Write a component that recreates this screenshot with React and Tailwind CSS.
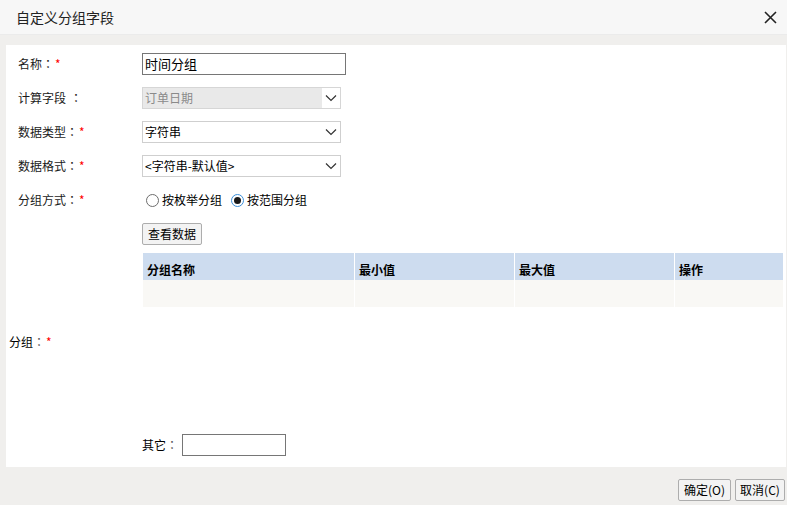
const FONT = { fontFamily: '"Microsoft YaHei", "Noto Sans CJK SC", "Noto Sans", sans-serif' };

function Star() {
  return <span className="text-[#ff0000] ml-[1px]">*</span>;
}

function Colon({ className = '' }) {
  return <span className={`font-['Noto_Sans_CJK_TC'] ${className}`}>：</span>;
}

function Chevron() {
  return (
    <svg width="12" height="8" viewBox="0 0 12 8" className="block">
      <path d="M1 1.5 L6 6.5 L11 1.5" fill="none" stroke="#333" strokeWidth="1.2" />
    </svg>
  );
}

function Select({ value, disabled }) {
  return (
    <div
      className={`flex items-center w-[199px] h-[22px] border ${
        disabled ? 'border-[#d6d6d6] bg-[#e9e9e9] text-[#8a8a8a]' : 'border-[#cfcfcf] bg-white text-black'
      }`}
    >
      <span className="flex-1 pl-[2px] leading-[20px]">{value}</span>
      <span className={`flex items-center justify-center w-[18px] h-full ${disabled ? 'bg-white' : ''}`}>
        <Chevron />
      </span>
    </div>
  );
}

function Row({ label, required, children, spaced }) {
  return (
    <div className="flex items-center h-[22px]">
      <div className="w-[136px] pl-[12px] text-[#1a1a1a]">
        {label}
        <Colon className={spaced ? 'ml-[4px]' : ''} />
        {required && <Star />}
      </div>
      {children}
    </div>
  );
}

function Radio({ checked, label }) {
  return (
    <label className="flex items-center gap-[3px]">
      <span
        className={`flex items-center justify-center w-[13px] h-[13px] rounded-full border ${
          checked ? 'border-[#3b8fd9]' : 'border-[#6d6d6d]'
        } bg-white`}
      >
        {checked && <span className="w-[7px] h-[7px] rounded-full bg-[#1a1a1a]" />}
      </span>
      <span>{label}</span>
    </label>
  );
}

export default function App() {
  const cols = [
    { label: '分组名称', w: 'w-[211px]' },
    { label: '最小值', w: 'w-[159px]' },
    { label: '最大值', w: 'w-[159px]' },
    { label: '操作', w: 'flex-1' },
  ];

  return (
    <div className="w-[787px] h-[505px] bg-[#f0efed] text-[12px] text-black flex flex-col" style={FONT}>
      {/* title bar */}
      <div className="h-[35px] bg-[#f7f7f7] border-b border-[#ebebeb] flex items-center justify-between pl-[16px] pr-[10px]">
        <span className="text-[14px] text-[#222]">自定义分组字段</span>
        <svg width="13" height="13" viewBox="0 0 13 13">
          <path d="M1 1 L12 12 M12 1 L1 12" stroke="#222" strokeWidth="1.6" />
        </svg>
      </div>

      {/* body */}
      <div className="mt-[10px] ml-[6px] mr-[1px] h-[422px] bg-white flex flex-col">
        <div className="flex flex-col gap-[12px] pt-[8px]">
          <Row label="名称" required>
            <div className="w-[204px] h-[22px] border border-[#767676] pl-[2px] leading-[20px] text-[13px]">时间分组</div>
          </Row>
          <Row label="计算字段" spaced>
            <Select value="订单日期" disabled />
          </Row>
          <Row label="数据类型" required>
            <Select value="字符串" />
          </Row>
          <Row label="数据格式" required>
            <Select value="<字符串-默认值>" />
          </Row>
          <Row label="分组方式" required>
            <div className="flex items-center gap-[9px] pl-[4px]">
              <Radio label="按枚举分组" />
              <Radio label="按范围分组" checked />
            </div>
          </Row>
        </div>

        <div className="pl-[136px] mt-[12px]">
          <button className="h-[22px] w-[60px] border border-[#adadad] rounded-[2px] bg-[#f3f3f3] text-[12px]">查看数据</button>
        </div>

        {/* table */}
        <div className="ml-[137px] mr-[3px] mt-[8px]">
          <div className="flex h-[27px] gap-[1px]">
            {cols.map((c) => (
              <div key={c.label} className={`${c.w} bg-[#cddcef] font-bold pl-[4px] pt-[10px] leading-[14px]`}>
                {c.label}
              </div>
            ))}
          </div>
          <div className="flex h-[27px] gap-[1px]">
            {cols.map((c) => (
              <div key={c.label} className={`${c.w} bg-[#f9f8f5]`} />
            ))}
          </div>
        </div>

        <div className="pl-[3px] mt-[27px] leading-[16px]">
          分组<Colon className="text-[#555]" />
          <Star />
        </div>

        <div className="flex items-center pl-[136px] mt-[84px]">
          <span>其它<Colon className="text-[#555]" /></span>
          <div className="ml-[4px] w-[104px] h-[22px] border border-[#767676]" />
        </div>
      </div>

      {/* footer */}
      <div className="flex justify-end gap-[4px] pr-[2px] mt-[12px]">
        <button className="h-[22px] w-[53px] border border-[#adadad] rounded-[2px] bg-[#f3f3f3] text-[12px]">确定(O)</button>
        <button className="h-[22px] w-[50px] border border-[#adadad] rounded-[2px] bg-[#f3f3f3] text-[12px]">取消(C)</button>
      </div>
    </div>
  );
}
